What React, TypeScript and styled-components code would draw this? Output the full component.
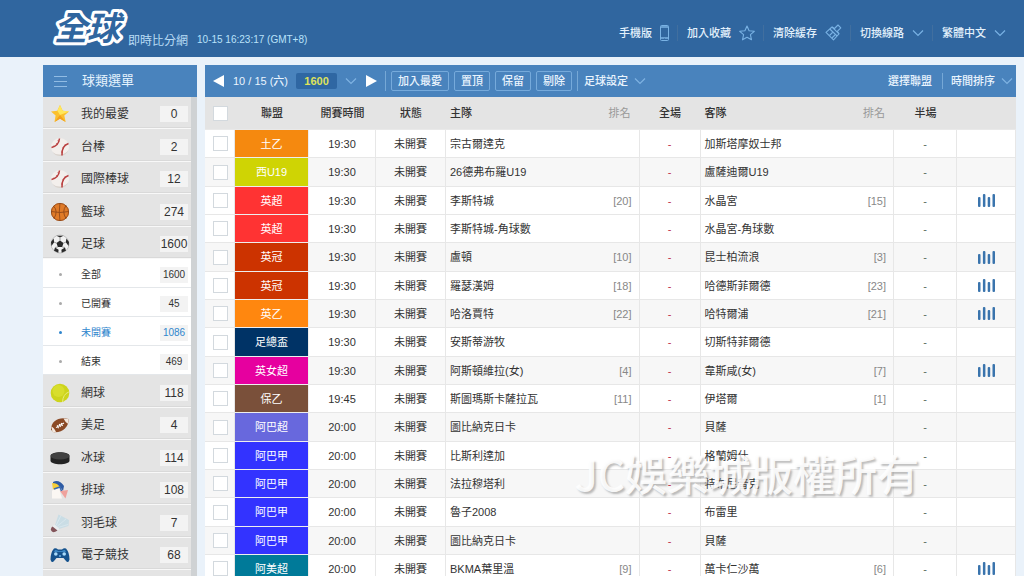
import React from "react";
import styled, { createGlobalStyle } from "styled-components";

const GlobalStyle = createGlobalStyle`
  *, *::before, *::after { box-sizing: border-box; }
  body {
    margin: 0;
    background: #eaf2fa;
    color: #333;
    font: 11px/16px "Liberation Sans", "Noto Sans CJK TC", sans-serif;
  }
  button {
    font: inherit;
    color: inherit;
    background: none;
    border: 0;
    padding: 0;
    cursor: pointer;
    white-space: nowrap;
  }
  ul { list-style: none; margin: 0; padding: 0; }
  h1, h2 { margin: 0; font-weight: 400; }
  svg { display: block; flex: none; }
`;

const Shell = styled.div`
  display: flex;
  flex-direction: column;
  height: 100vh;
  overflow: hidden;
`;

const TopBar = styled.header`
  flex: none;
  display: flex;
  justify-content: space-between;
  height: 57px;
  padding: 0 18px 0 48px;
  background: #30669f;
  color: #e3f1fc;
`;

const Brand = styled.div`
  display: flex;
  align-items: flex-end;
  padding-bottom: 8px;
`;

const LogoArt = styled.svg`
  overflow: visible;
`;

const SiteName = styled.h1`
  color: #b9dcf5;
  font-size: 12px;
  line-height: 16px;
`;

const Clock = styled.time`
  margin-left: 9px;
  color: #b9e2fa;
  font-size: 10px;
  line-height: 18px;
`;

const TopMenu = styled.nav`
  display: flex;
  align-items: center;
  padding-top: 8px;
`;

const TopItem = styled.button`
  display: flex;
  align-items: center;
  gap: 8px;
  height: 16px;
  padding: 0 8px 0 9px;
  border-left: 1px solid #416f9f;
  font-weight: 500;
  &:first-child { border-left: 0; }
  &:last-child { padding-right: 0; }
  svg { color: #79b2e4; }
`;

const Body = styled.div`
  flex: 1;
  min-height: 0;
  display: flex;
  gap: 8px;
  padding: 8px 8px 0 43px;
`;

const Sidebar = styled.aside`
  flex: none;
  width: 154px;
  display: flex;
  flex-direction: column;
`;

const SideHeading = styled.div`
  flex: none;
  display: flex;
  align-items: center;
  height: 32px;
  padding-left: 11px;
  gap: 15px;
  background: #4983bd;
  color: #e6f3fd;
  h2 { font-size: 13px; }
  svg { color: #91bce4; }
`;

const SportList = styled.ul`
  flex: 1;
  background: #e4e4e4;
  border-right: 6px solid #cfd2d4;
`;

const SportItem = styled.li`
  > button { height: 32px; }
  &:nth-child(even) > button { height: 33px; }
`;

const SportButton = styled.button`
  display: grid;
  grid-template-columns: 34px 1fr 28px;
  align-items: center;
  width: 100%;
  padding: 3px 3px 0 0;
  border-bottom: 1px solid #f8f8f8;
  box-shadow: inset 0 -1px #d9d9d9;
  background: #e4e4e4;
  font-size: 12px;
  text-align: left;
  svg { justify-self: center; }
`;

const SportName = styled.span`
  padding-left: 4px;
`;

const Count = styled.span`
  justify-self: stretch;
  background: #f3f3f3;
  text-align: center;
`;

const SubButton = styled.button<{ $active?: boolean }>`
  display: grid;
  grid-template-columns: 34px 1fr 28px;
  align-items: center;
  width: 100%;
  height: 29px;
  padding: 3px 3px 0 0;
  border-bottom: 1px solid #e4e7ea;
  background: #fff;
  color: ${(p) => (p.$active ? "#2f86cd" : "#333")};
  font-size: 10px;
  text-align: left;
`;

const Dot = styled.i<{ $active?: boolean }>`
  justify-self: center;
  width: 3px;
  height: 3px;
  border-radius: 50%;
  background: ${(p) => (p.$active ? "#2f86cd" : "#aaa")};
`;

const Main = styled.main`
  position: relative;
  flex: 1;
  min-width: 0;
`;

const Toolbar = styled.div`
  display: flex;
  align-items: center;
  height: 32px;
  padding: 0 3px 0 8px;
  background: #4983bd;
  color: #e9f4fd;
  font-weight: 500;
`;

const DayPicker = styled.div`
  display: flex;
  align-items: center;
  gap: 9px;
  padding-right: 8px;
`;

const DayLabel = styled.button`
  display: flex;
  align-items: center;
  gap: 8px;
  svg { color: #7fb3e2; }
`;

const Total = styled.strong`
  width: 41px;
  border-radius: 2px;
  background: #2f67a3;
  color: #dfe25a;
  text-align: center;
`;

const ActionGroup = styled.div`
  display: flex;
  gap: 5px;
  padding: 0 5px;
  border: solid #76a8d6;
  border-width: 0 1px;
`;

const ActionButton = styled.button`
  height: 20px;
  padding: 0 6px;
  border: 1px solid #76aadb;
  border-radius: 2px;
`;

const MenuButton = styled.button`
  display: flex;
  align-items: center;
  gap: 6px;
  padding-left: 6px;
  svg { color: #7fb3e2; }
`;

const ToolbarEnd = styled.div`
  display: flex;
  align-items: center;
  margin-left: auto;
  > button { padding: 0 0 0 8px; }
  > button:first-child { padding: 0 10px 0 0; border-right: 1px solid #76a8d6; }
`;

const Matches = styled.table`
  width: 100%;
  table-layout: fixed;
  border-collapse: separate;
  border-spacing: 0;
  background: #fff;
`;

const HeadCell = styled.th<{ $align?: string; $muted?: boolean }>`
  height: 33px;
  padding: ${(p) => (p.$align === "left" ? "0 4px" : p.$align === "right" ? "0 9px 0 0" : "0")};
  border-bottom: 1px solid #e9e9e9;
  background: #e4e4e4;
  color: ${(p) => (p.$muted ? "#999" : "#333")};
  font-weight: ${(p) => (p.$muted ? 400 : 500)};
  text-align: ${(p) => p.$align ?? "center"};
`;

const MatchRow = styled.tr<{ $shaded?: boolean }>`
  height: 28px;
  background: ${(p) => (p.$shaded ? "#f7f7f7" : "#fff")};
  &:nth-child(3n + 2) { height: 29px; }
`;

const Cell = styled.td<{ $tone?: string }>`
  padding: 0;
  border: solid #e7e7e7;
  border-width: 0 1px 1px 0;
  color: ${(p) => p.$tone ?? "#333"};
  text-align: center;
`;

const LeagueCell = styled(Cell)<{ $color: string }>`
  border-color: #eee;
  background: ${(p) => p.$color};
  color: #fff;
`;

const TeamCell = styled(Cell)`
  padding-left: 4px;
  border-right: 0;
  text-align: left;
  white-space: nowrap;
`;

const RankCell = styled(Cell)`
  padding-right: 7px;
  color: #888;
  text-align: right;
`;

const Tick = styled.input`
  appearance: none;
  display: block;
  width: 15px;
  height: 15px;
  margin: 0 0 0 8px;
  border: 1px solid #d3d9de;
  background: #fff;
`;

const ChartButton = styled.button`
  display: block;
  margin: 0 auto;
  color: #3a74ad;
`;

const Watermark = styled.div`
  position: absolute;
  right: 97px;
  top: 380px;
  color: rgba(255, 255, 255, 0.9);
  font: 500 42px/56px "Noto Sans CJK TC", sans-serif;
  text-shadow: 2px 2px 2px rgba(110, 110, 110, 0.45);
  white-space: nowrap;
  pointer-events: none;
`;

const Chevron = () => (
  <svg width="12" height="8" viewBox="0 0 12 8" fill="none" stroke="currentColor" strokeWidth="1.2">
    <path d="M1 1.5 6 6.5 11 1.5" />
  </svg>
);

const Arrow = ({ back }: { back?: boolean }) => (
  <svg width="11" height="12" viewBox="0 0 11 12" fill="#fff">
    <path d={back ? "M11 0v12L0 6z" : "M0 0v12l11-6z"} />
  </svg>
);

const Logo = () => (
  <LogoArt width="80" height="49" viewBox="0 0 80 49" role="img" aria-label="全球">
    <text
      x="6"
      y="40"
      fontFamily='"Noto Sans CJK TC", sans-serif'
      fontSize="33"
      fontWeight="700"
      fontStyle="italic"
      fill="#30669f"
      stroke="#fff"
      strokeWidth="6"
      strokeLinejoin="round"
      paintOrder="stroke"
    >
      全球
    </text>
  </LogoArt>
);

const PhoneIcon = () => (
  <svg width="9" height="16" viewBox="0 0 9 16" fill="none" stroke="currentColor">
    <rect x=".5" y=".5" width="8" height="15" rx="1" />
    <path d="M1 2h7M1 13h7" strokeWidth="1.6" />
    <path d="M4 14h1" stroke="#30669f" />
  </svg>
);

const StarOutline = () => (
  <svg width="16" height="16" viewBox="0 0 16 16" fill="none" stroke="currentColor" strokeWidth="1.1" strokeLinejoin="round">
    <path d="m8 1 2.1 4.7 5.2.6-3.9 3.4 1.1 5.1L8 12.2l-4.500 2.600 1.100-5.100L.7 6.300l5.200-.600z" />
  </svg>
);

const BrushIcon = () => (
  <svg width="17" height="17" viewBox="0 0 17 17" fill="none" stroke="currentColor" strokeWidth="1.1" strokeLinejoin="round">
    <path d="M9.500 4.500 13 1l2.800 2.800-3.500 3.500 1.700 2.500-5.500 6L1 8.300 7 3z" />
    <path d="m7 3 7 6.800M4.800 5l7.300 7M7.500 8.500l-3 3M10 11l-3 3" />
  </svg>
);

const HamburgerIcon = () => (
  <svg width="13" height="13" viewBox="0 0 13 13" stroke="currentColor" strokeWidth="1.2">
    <path d="M0 1.500h13M0 6.500h13M0 11.500h13" />
  </svg>
);

const BarsIcon = () => (
  <svg width="17" height="13" viewBox="0 0 17 13" fill="currentColor">
    <rect x="0" y="3" width="2.500" height="10" rx="1" />
    <rect x="4.900" y="0" width="2.500" height="13" rx="1" />
    <rect x="9.700" y="3" width="2.500" height="10" rx="1" />
    <rect x="14.500" y="0" width="2.500" height="13" rx="1" />
  </svg>
);

const sportArt: Record<string, React.ReactNode> = {
  star: (
    <>
      <path d="m10 1 2.700 5.700 6.300.7-4.700 4.200 1.400 6.400-5.700-3.200L4.500 18l1.100-6.400L1 7.400l6.300-.7z" fill="#fbc02d" />
      <path d="m10 1 2.700 5.700 6.300.7L10 11 7.300 6.700z" fill="#ffe75c" />
      <path d="m10 11 5.700 7-5.700-3.200L4.500 18z" fill="#f3a01f" />
    </>
  ),
  baseball: (
    <>
      <circle cx="10" cy="10" r="9" fill="#f3efec" />
      <path d="M2.500 15A9 9 0 0 0 18.500 13 11 11 0 0 1 2.500 15" fill="#d9d3ce" />
      <g fill="none" stroke="#b93f3f">
        <path d="M9.500 1.500C9 6 6 9.500 1.500 10.500M18.500 6.500C14 8 11.500 12 12 18.500" strokeWidth="1.500" />
        <path d="M9.200 4.500 7.500 3.700M7.600 7.500 6 6.200M4.800 10 3.800 8.500M16 9 15 7.500M14 11.800 12.500 10.800M12.600 15.500 11 14.900" strokeWidth=".7" />
      </g>
    </>
  ),
  basketball: (
    <>
      <circle cx="10" cy="10" r="9" fill="#e07b28" />
      <g fill="none" stroke="#91481a" strokeWidth=".9">
        <circle cx="10" cy="10" r="8.600" />
        <path d="M1 9.500q9 2 18 0M10 1q-1.500 9 0 18M3.500 4q5 5 .5 12.500M16 3.500q-4.500 6 0 13" />
      </g>
    </>
  ),
  soccer: (
    <>
      <circle cx="10" cy="10" r="9" fill="#f1f1f1" stroke="#999" strokeWidth=".5" />
      <path d="m10 6.500 3.500 2.500-1.300 4H7.800l-1.300-4zM6.500 1.700h7L10 3.600zM1 8l2.600-3.600.6 3.800L1.400 12zM19 8l-2.600-3.600-.6 3.800 2.800 3.800zM4 16.700l1-3.200 3.600 2.300-.3 3zM16 16.700l-1-3.200-3.600 2.300.3 3z" fill="#292929" />
      <path d="M10 3.600v3M4.200 8.200 6.500 9M15.800 8.200 13.500 9M5 13.500 7.800 13M15 13.500l-2.800-.5" stroke="#777" strokeWidth=".7" />
    </>
  ),
  tennis: (
    <>
      <circle cx="10" cy="10" r="9.300" fill="#cdd41c" />
      <circle cx="8.500" cy="8" r="6" fill="#d8de2c" />
      <path d="M18.800 9Q13 11 12.500 19" fill="none" stroke="#e8ec80" strokeWidth="1" />
    </>
  ),
  football: (
    <>
      <path d="M1 14.500C1 6 9 1.500 18.500 4 19.500 12 11.500 18.500 3 17z" fill="#8b4a26" />
      <path d="M1.200 11.500q3 1 5 6L2.500 17zM13.500 3.500q1.500 3.500 4.800 5.500l.2-5z" fill="#f3e8de" />
      <path d="M6 12.500 14 8M7.200 10.200l1.300 3M9.200 9l1.300 3M11.200 8l1.300 3" stroke="#fff" strokeWidth="1.100" />
    </>
  ),
  puck: (
    <>
      <path d="M.500 8c0-5 19-5 19 0v4.500c0 5-19 5-19 0z" fill="#232323" />
      <ellipse cx="10" cy="8" rx="9.400" ry="3.600" fill="#414141" />
    </>
  ),
  volleyball: (
    <>
      <path d="M2 10.500 9 8l3 10.500H2z" fill="#fbf7f3" />
      <path d="M3 2q6-3 11 4l-1 5Q10 5 3 4z" fill="#2d5ba4" />
      <path d="M2 3q6 0 7.500 4L3 9.500z" fill="#f4cd38" />
      <path d="m10 11 8-1-2.500 8.500z" fill="#efa19c" />
      <path d="M4 9 10 7l1.500 4" fill="none" stroke="#3a6ab0" strokeWidth="1.500" />
    </>
  ),
  shuttle: (
    <>
      <path d="M5 12 8.500 1.500 19 7l-.5 6L9 16z" fill="#cadde5" />
      <path d="m6 12.500 5-10M7 13.500l9-7.500M8 14.500l10-3" stroke="#dbe9ef" strokeWidth=".8" />
      <path d="m4.500 11.500 5 4.500-2 1.500-5-4z" fill="#e9edef" />
      <path d="m2.500 13.500 5 4Q3 20.500 1.500 18T2.500 13.500" fill="#82545a" />
    </>
  ),
  gamepad: (
    <>
      <path d="M4 3.500Q6 2.500 8 4.500h4q2-2 4-1 3.500 4 3.500 11-.5 3-2.500 2.500-2-2-3.500-4h-7Q5 15 3 17q-2 .5-2.500-2.500Q.500 7.500 4 3.500" fill="#15528d" />
      <path d="M5 5q2-.5 3 1h4q1-1.500 3-1l1 2H4z" fill="#3b86c4" />
      <circle cx="5.800" cy="9" r="1.800" fill="#a8dafa" />
      <circle cx="14.200" cy="9" r="1.800" fill="#a8dafa" />
      <circle cx="10" cy="11" r="1" fill="#6bb1e6" />
    </>
  ),
};

const SportIcon = ({ kind }: { kind: string }) => (
  <svg width="20" height="20" viewBox="0 0 20 20">{sportArt[kind]}</svg>
);

interface Sport {
  icon: string;
  name: string;
  count: number;
  children?: { name: string; count: number; active?: boolean }[];
}

const sports: Sport[] = [
  { icon: "star", name: "我的最愛", count: 0 },
  { icon: "baseball", name: "台棒", count: 2 },
  { icon: "baseball", name: "國際棒球", count: 12 },
  { icon: "basketball", name: "籃球", count: 274 },
  {
    icon: "soccer",
    name: "足球",
    count: 1600,
    children: [
      { name: "全部", count: 1600 },
      { name: "已開賽", count: 45 },
      { name: "未開賽", count: 1086, active: true },
      { name: "結束", count: 469 },
    ],
  },
  { icon: "tennis", name: "網球", count: 118 },
  { icon: "football", name: "美足", count: 4 },
  { icon: "puck", name: "冰球", count: 114 },
  { icon: "volleyball", name: "排球", count: 108 },
  { icon: "shuttle", name: "羽毛球", count: 7 },
  { icon: "gamepad", name: "電子競技", count: 68 },
];

interface Match {
  league: string;
  color: string;
  time: string;
  home: string;
  homeRank?: number;
  away: string;
  awayRank?: number;
  chart?: boolean;
  shaded?: boolean;
}

const matches: Match[] = [
  { league: "土乙", color: "#f5890f", time: "19:30", home: "宗古爾達克", away: "加斯塔摩奴士邦" },
  { league: "西U19", color: "#cfd404", time: "19:30", home: "26德弗布羅U19", away: "盧薩迪爾U19", shaded: true },
  { league: "英超", color: "#ff3333", time: "19:30", home: "李斯特城", homeRank: 20, away: "水晶宮", awayRank: 15, chart: true },
  { league: "英超", color: "#ff3333", time: "19:30", home: "李斯特城-角球數", away: "水晶宮-角球數" },
  { league: "英冠", color: "#cc3300", time: "19:30", home: "盧頓", homeRank: 10, away: "昆士柏流浪", awayRank: 3, chart: true, shaded: true },
  { league: "英冠", color: "#cc3300", time: "19:30", home: "羅瑟漢姆", homeRank: 18, away: "哈德斯菲爾德", awayRank: 23, chart: true },
  { league: "英乙", color: "#ff870f", time: "19:30", home: "哈洛賈特", homeRank: 22, away: "哈特爾浦", awayRank: 21, chart: true, shaded: true },
  { league: "足總盃", color: "#003366", time: "19:30", home: "安斯蒂游牧", away: "切斯特菲爾德" },
  { league: "英女超", color: "#e6009f", time: "19:30", home: "阿斯頓維拉(女)", homeRank: 4, away: "韋斯咸(女)", awayRank: 7, chart: true, shaded: true },
  { league: "保乙", color: "#7a503a", time: "19:45", home: "斯圖瑪斯卡薩拉瓦", homeRank: 11, away: "伊塔爾", awayRank: 1 },
  { league: "阿巴超", color: "#6868dd", time: "20:00", home: "圖比納克日卡", away: "貝薩", shaded: true },
  { league: "阿巴甲", color: "#3333ff", time: "20:00", home: "比斯利達加", away: "格蘭姆什" },
  { league: "阿巴甲", color: "#3333ff", time: "20:00", home: "法拉穆塔利", away: "特布尼普克", shaded: true },
  { league: "阿巴甲", color: "#3333ff", time: "20:00", home: "魯子2008", away: "布雷里" },
  { league: "阿巴甲", color: "#3333ff", time: "20:00", home: "圖比納克日卡", away: "貝薩", shaded: true },
  { league: "阿美超", color: "#007a99", time: "20:00", home: "BKMA葉里溫", homeRank: 9, away: "萬卡仁沙萬", awayRank: 6, chart: true },
];

const rank = (n?: number) => (n === undefined ? null : `[${n}]`);

export default function App() {
  return (
    <Shell>
      <GlobalStyle />
      <TopBar>
        <Brand>
          <Logo />
          <SiteName>即時比分網</SiteName>
          <Clock>10-15 16:23:17 (GMT+8)</Clock>
        </Brand>
        <TopMenu>
          <TopItem>手機版<PhoneIcon /></TopItem>
          <TopItem>加入收藏<StarOutline /></TopItem>
          <TopItem>清除緩存<BrushIcon /></TopItem>
          <TopItem>切換線路<Chevron /></TopItem>
          <TopItem>繁體中文<Chevron /></TopItem>
        </TopMenu>
      </TopBar>
      <Body>
        <Sidebar>
          <SideHeading>
            <HamburgerIcon />
            <h2>球類選單</h2>
          </SideHeading>
          <SportList>
            {sports.map((s) => (
              <SportItem key={s.name}>
                <SportButton>
                  <SportIcon kind={s.icon} />
                  <SportName>{s.name}</SportName>
                  <Count>{s.count}</Count>
                </SportButton>
                {s.children && (
                  <ul>
                    {s.children.map((c) => (
                      <li key={c.name}>
                        <SubButton $active={c.active}>
                          <Dot $active={c.active} />
                          <SportName>{c.name}</SportName>
                          <Count>{c.count}</Count>
                        </SubButton>
                      </li>
                    ))}
                  </ul>
                )}
              </SportItem>
            ))}
          </SportList>
        </Sidebar>
        <Main>
          <Toolbar>
            <DayPicker>
              <button aria-label="前一天"><Arrow back /></button>
              <DayLabel>
                10 / 15 (六)
                <Total>1600</Total>
                <Chevron />
              </DayLabel>
              <button aria-label="後一天"><Arrow /></button>
            </DayPicker>
            <ActionGroup>
              <ActionButton>加入最愛</ActionButton>
              <ActionButton>置頂</ActionButton>
              <ActionButton>保留</ActionButton>
              <ActionButton>剔除</ActionButton>
            </ActionGroup>
            <MenuButton>足球設定<Chevron /></MenuButton>
            <ToolbarEnd>
              <button>選擇聯盟</button>
              <MenuButton>時間排序<Chevron /></MenuButton>
            </ToolbarEnd>
          </Toolbar>
          <Matches>
            <colgroup>
              <col style={{ width: 30 }} />
              <col style={{ width: 74 }} />
              <col style={{ width: 67 }} />
              <col style={{ width: 70 }} />
              <col />
              <col style={{ width: 40 }} />
              <col style={{ width: 61 }} />
              <col />
              <col style={{ width: 40 }} />
              <col style={{ width: 63 }} />
              <col style={{ width: 59 }} />
            </colgroup>
            <thead>
              <tr>
                <HeadCell><Tick type="checkbox" aria-label="全選" /></HeadCell>
                <HeadCell>聯盟</HeadCell>
                <HeadCell>開賽時間</HeadCell>
                <HeadCell>狀態</HeadCell>
                <HeadCell $align="left">主隊</HeadCell>
                <HeadCell $align="right" $muted>排名</HeadCell>
                <HeadCell>全場</HeadCell>
                <HeadCell $align="left">客隊</HeadCell>
                <HeadCell $align="right" $muted>排名</HeadCell>
                <HeadCell>半場</HeadCell>
                <HeadCell />
              </tr>
            </thead>
            <tbody>
              {matches.map((m, i) => (
                <MatchRow key={i} $shaded={m.shaded}>
                  <Cell><Tick type="checkbox" aria-label={m.home} /></Cell>
                  <LeagueCell $color={m.color}>{m.league}</LeagueCell>
                  <Cell>{m.time}</Cell>
                  <Cell>未開賽</Cell>
                  <TeamCell>{m.home}</TeamCell>
                  <RankCell>{rank(m.homeRank)}</RankCell>
                  <Cell $tone="#c0334d">-</Cell>
                  <TeamCell>{m.away}</TeamCell>
                  <RankCell>{rank(m.awayRank)}</RankCell>
                  <Cell $tone="#5c6b60">-</Cell>
                  <Cell>
                    {m.chart && <ChartButton aria-label="數據"><BarsIcon /></ChartButton>}
                  </Cell>
                </MatchRow>
              ))}
            </tbody>
          </Matches>
          <Watermark>JC娛樂城版權所有</Watermark>
        </Main>
      </Body>
    </Shell>
  );
}
